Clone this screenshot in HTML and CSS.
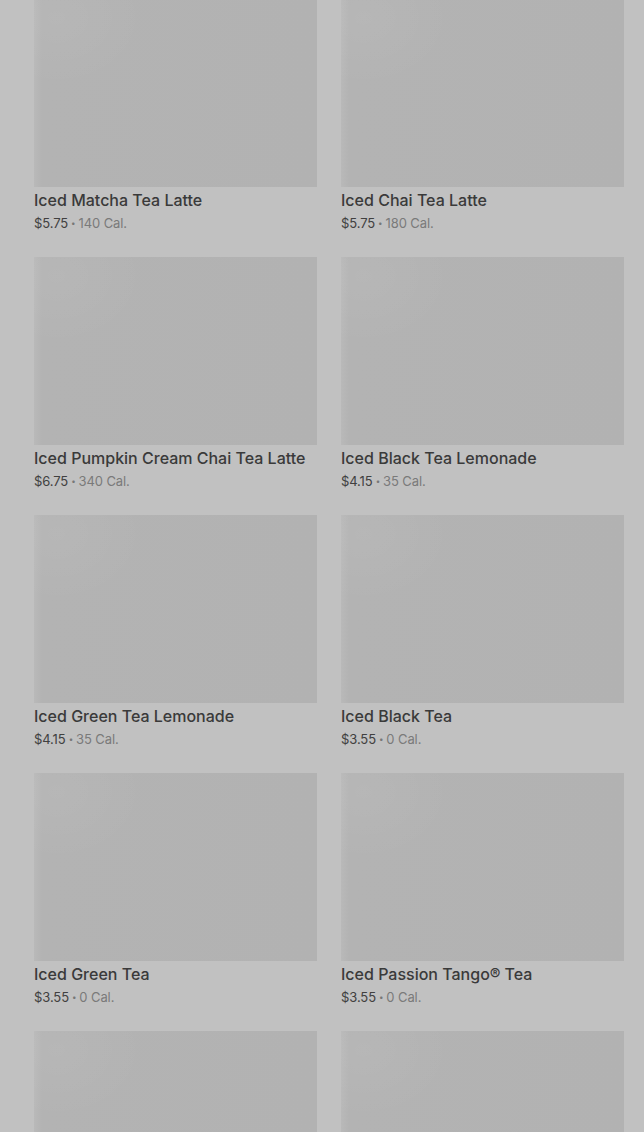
FILE: index.html
```html
<!DOCTYPE html>
<html>
<head>
<meta charset="utf-8">
<link rel="stylesheet" href="styles.css">
</head>
<body>
<main class="grid">
  <div class="card"><div class="thumb"></div><div class="name">Iced Matcha Tea Latte</div><div class="meta"><span class="price">$5.75</span><span class="dot">•</span><span class="cal">140 Cal.</span></div></div>
  <div class="card"><div class="thumb"></div><div class="name">Iced Chai Tea Latte</div><div class="meta"><span class="price">$5.75</span><span class="dot">•</span><span class="cal">180 Cal.</span></div></div>
  <div class="card"><div class="thumb"></div><div class="name">Iced Pumpkin Cream Chai Tea Latte</div><div class="meta"><span class="price">$6.75</span><span class="dot">•</span><span class="cal">340 Cal.</span></div></div>
  <div class="card"><div class="thumb"></div><div class="name">Iced Black Tea Lemonade</div><div class="meta"><span class="price">$4.15</span><span class="dot">•</span><span class="cal">35 Cal.</span></div></div>
  <div class="card"><div class="thumb"></div><div class="name">Iced Green Tea Lemonade</div><div class="meta"><span class="price">$4.15</span><span class="dot">•</span><span class="cal">35 Cal.</span></div></div>
  <div class="card"><div class="thumb"></div><div class="name">Iced Black Tea</div><div class="meta"><span class="price">$3.55</span><span class="dot">•</span><span class="cal">0 Cal.</span></div></div>
  <div class="card"><div class="thumb"></div><div class="name">Iced Green Tea</div><div class="meta"><span class="price">$3.55</span><span class="dot">•</span><span class="cal">0 Cal.</span></div></div>
  <div class="card"><div class="thumb"></div><div class="name">Iced Passion Tango® Tea</div><div class="meta"><span class="price">$3.55</span><span class="dot">•</span><span class="cal">0 Cal.</span></div></div>
  <div class="card"><div class="thumb"></div></div>
  <div class="card"><div class="thumb"></div></div>
</main>
</body>
</html>
```
FILE: styles.css
```css
html, body {
  margin: 0;
  padding: 0;
  background: #c1c1c1;
  overflow: hidden;
}
body {
  font-family: Inter, "Noto Sans", sans-serif;
}
.grid {
  display: grid;
  grid-template-columns: 283px 283px;
  column-gap: 24px;
  row-gap: 25px;
  padding: 0 20px 0 34px;
  margin-top: -1px;
}
.card {
  display: flex;
  flex-direction: column;
}
.thumb {
  height: 188px;
  background:
    radial-gradient(ellipse 90px 70px at 8% 10%, rgba(255,255,255,0.05), rgba(255,255,255,0) 100%),
    linear-gradient(90deg, #b9b9b9 0px, #b3b3b3 8px, #b2b2b2 100%);
}
.name {
  margin-top: 3px;
  font-size: 16px;
  line-height: 20px;
  font-weight: 500;
  color: #3a3a3a;
  letter-spacing: 0;
  white-space: nowrap;
}
.meta {
  margin-top: 4px;
  font-size: 13px;
  line-height: 18px;
  display: flex;
  align-items: center;
  gap: 3px;
  letter-spacing: -0.1px;
}
.price { color: #404040; }
.dot { color: #777; font-size: 8px; }
.cal { color: #7a7a7a; }
```
